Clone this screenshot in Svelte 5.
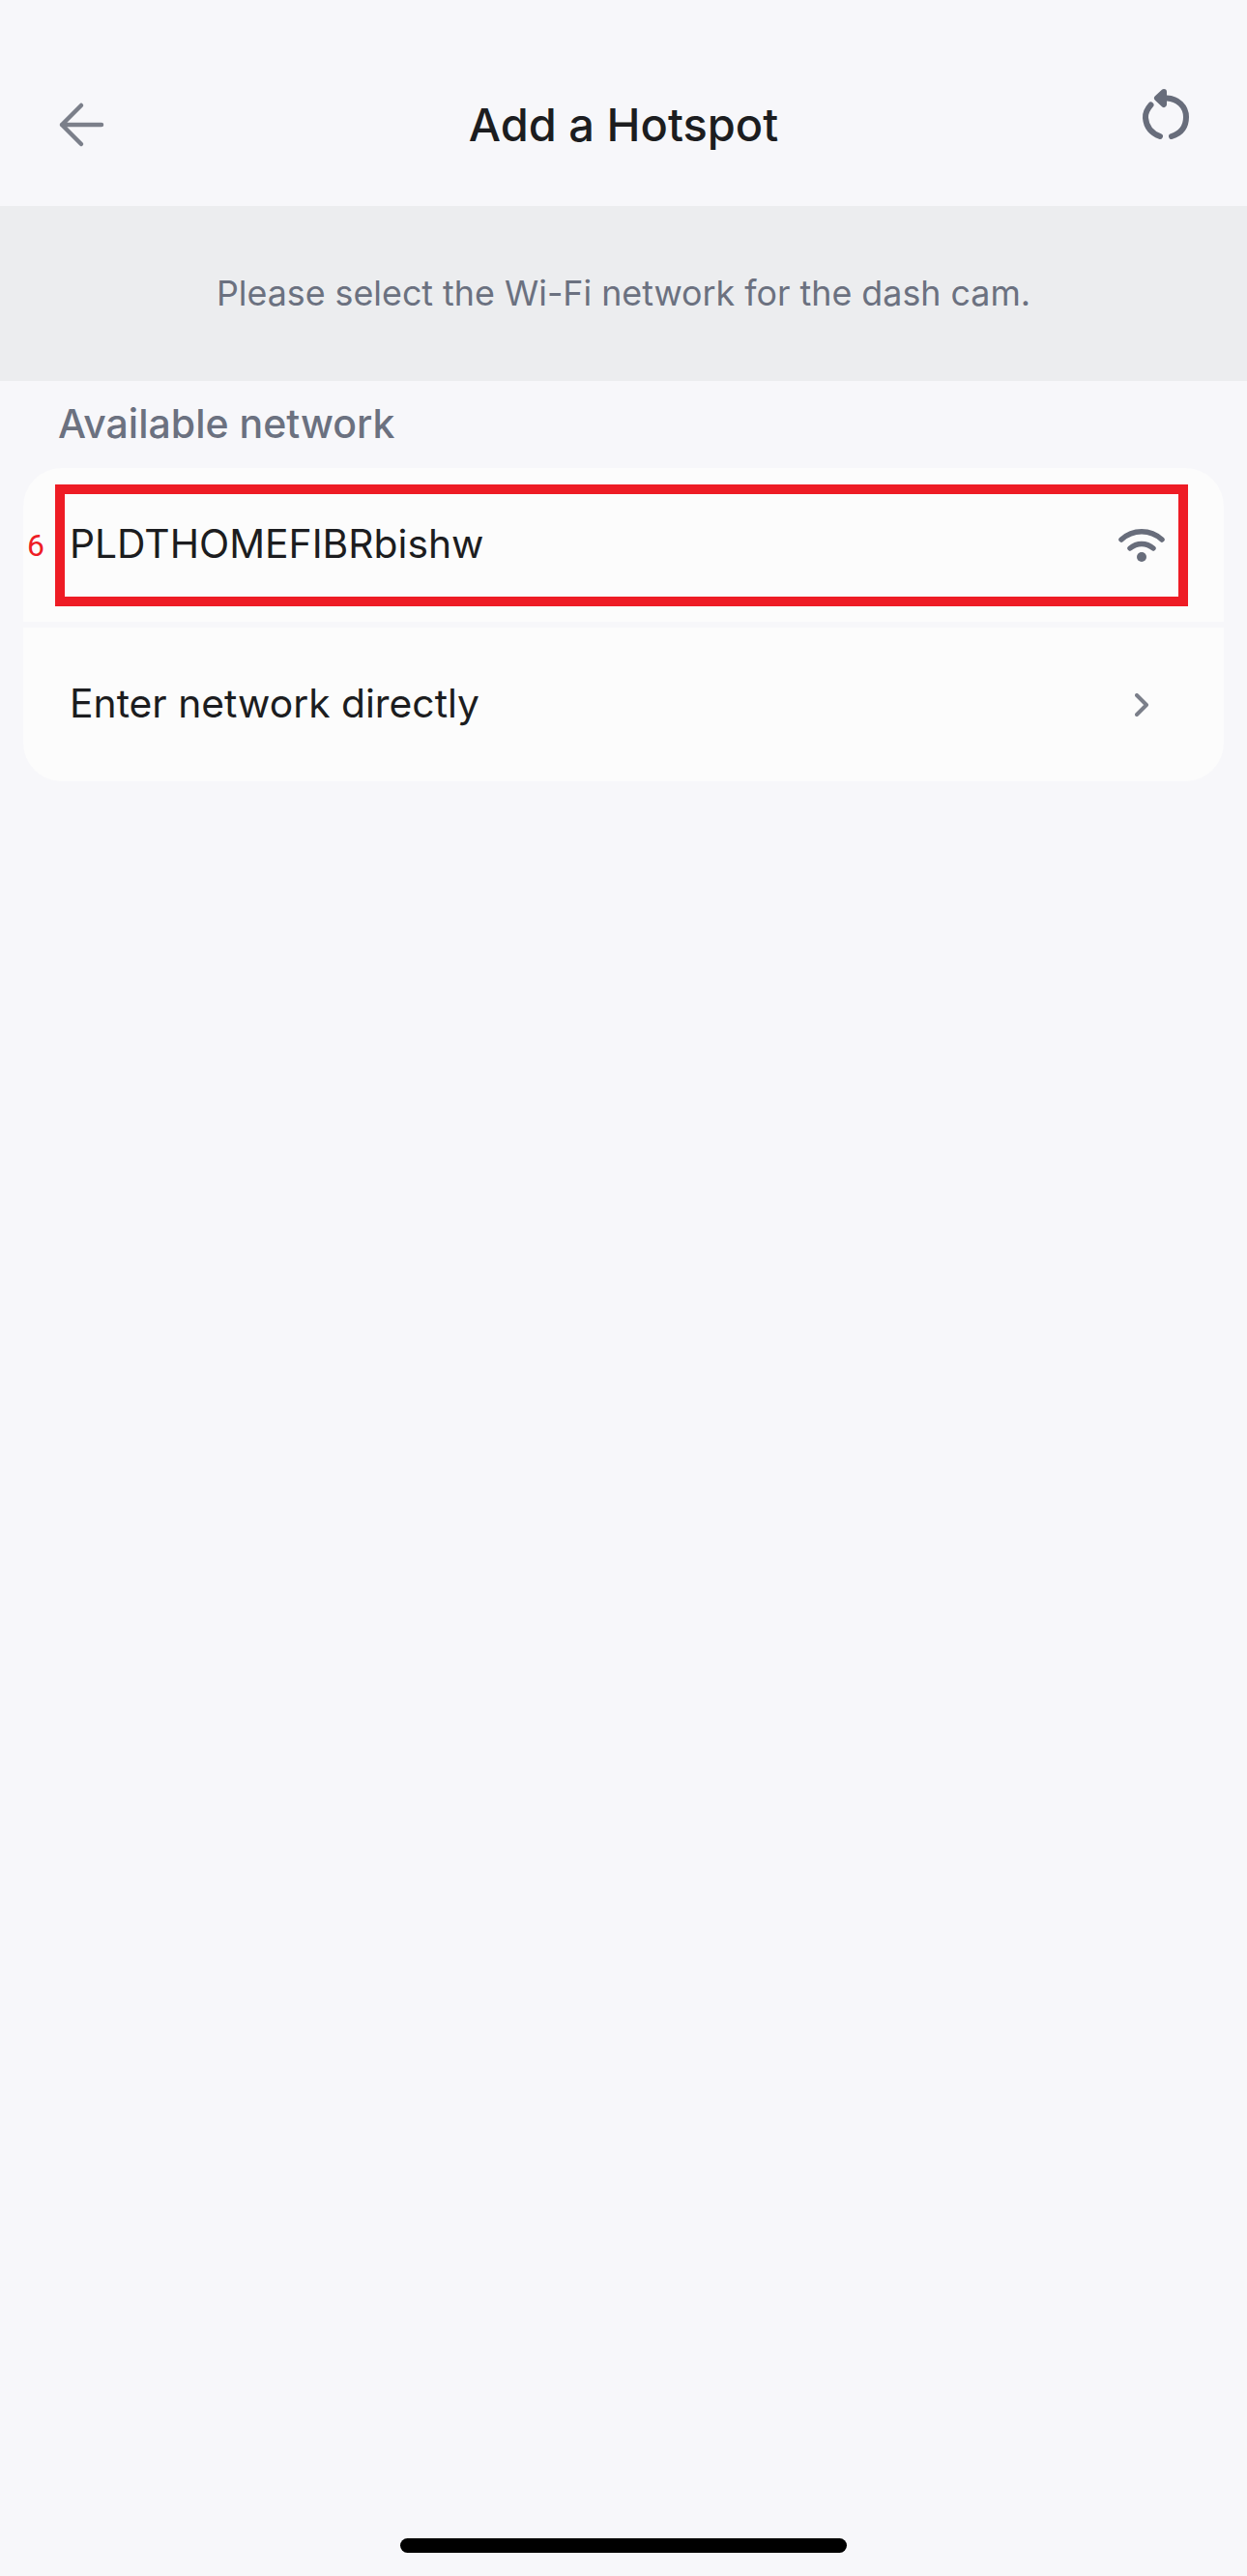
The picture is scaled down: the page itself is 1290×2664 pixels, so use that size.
<script>
    const networks = [{ name: "PLDTHOMEFIBRbishw", icon: "wifi" }, { name: "Enter network directly", icon: "chevron" }];
</script>

<div class="page">
    <header class="topbar">
        <button class="icon-btn back" aria-label="Back">
            <svg width="48" height="48" viewBox="0 0 48 48" fill="none" stroke="#7b7f8a" stroke-width="4.5" stroke-linecap="round" stroke-linejoin="round">
                <path d="M45 24H4M24 4L4 24l20 20" />
            </svg>
        </button>
        <h1>Add a Hotspot</h1>
        <button class="icon-btn refresh" aria-label="Refresh">
            <svg width="50" height="54" viewBox="0 0 50 54" fill="none" stroke="#686d7b" stroke-width="6" stroke-linecap="round" stroke-linejoin="round">
                <path d="M9.500 17.500C5.500 22 3.500 26 4 31c.8 9 5.500 15.500 15 19" />
                <path d="M31 50c9.500-3 15-10 15-20 0-11-8.500-19-20-19.500" />
                <path d="M23 4l-7 6.500 7 6.500z" fill="#686d7b" />
            </svg>
        </button>
    </header>

    <div class="banner">Please select the Wi-Fi network for the dash cam.</div>

    <div class="section-label">Available network</div>

    <div class="card">
        {#each networks as net}
            <div class="row">
                <span class="name">{net.name}</span>
                {#if net.icon === "wifi"}
                    <svg class="wifi" width="48" height="36" viewBox="0 0 48 36" fill="none" stroke="#686d7b" stroke-width="5.500" stroke-linecap="round">
                        <path d="M3 12C15 1 33 1 45 12" />
                        <path d="M12 21c7-6 17-6 24 0" />
                        <circle cx="24" cy="30" r="5" fill="#686d7b" stroke="none" />
                    </svg>
                {:else}
                    <svg class="chevron" width="14" height="24" viewBox="0 0 14 24" fill="none" stroke="#7b7f8a" stroke-width="4" stroke-linecap="round" stroke-linejoin="round">
                        <path d="M2 2l10 10L2 22" />
                    </svg>
                {/if}
            </div>
        {/each}

        <!-- annotation over first row -->
        <div class="marker"></div>
        <span class="marker-num">6</span>
    </div>

    <div class="home-bar"></div>
</div>

<style>
    :global(body) {
        margin: 0;
        background: #f7f7fa;
    }

    .page {
        height: 2664px;
        position: relative;
        background: #f7f7fa;
        font-family: Inter, "Liberation Sans", sans-serif;
        overflow: hidden;
    }

    .topbar {
        height: 213px;
        position: relative;
        display: flex;
        align-items: center;
        justify-content: center;
    }

    h1 {
        margin: 0;
        font-size: 47px;
        font-weight: 500;
        color: #1c1d20;
        position: relative;
        top: 22px;
    }

    .icon-btn {
        position: absolute;
        padding: 0;
        border: 0;
        background: none;
        line-height: 0;
    }

    .back {
        left: 60px;
        top: 105px;
    }

    .refresh {
        left: 1181px;
        top: 91px;
    }

    .banner {
        height: 181px;
        background: #ecedef;
        display: flex;
        align-items: center;
        justify-content: center;
        padding-bottom: 2px;
        box-sizing: border-box;
        font-size: 35.8px;
        color: #6b7180;
    }

    .section-label {
        margin: 20px 0 0 60px;
        height: 70px;
        font-size: 41px;
        line-height: 48px;
        font-weight: 500;
        color: #6b7180;
    }

    .card {
        margin: 0 24px 0 24px;
        position: relative;
        background: #f7f7fa;
        border-radius: 40px;
        overflow: hidden;
        display: flex;
        flex-direction: column;
        gap: 6px;
    }

    .row {
        height: 159px;
        background: #fcfcfc;
        display: flex;
        align-items: center;
        justify-content: space-between;
        padding: 0 60px 0 48px;
        font-size: 40.8px;
        color: #1c1d20;
    }

    .name {
        padding-bottom: 3px;
    }

    .wifi {
        margin-right: 1px;
    }

    .chevron {
        margin-right: 18px;
    }

    .marker {
        position: absolute;
        left: 33px;
        top: 17px;
        width: 1152px;
        height: 106px;
        border: 10px solid #ee1c25;
    }

    .marker-num {
        position: absolute;
        left: 4px;
        top: 61px;
        font-family: Roboto, sans-serif;
        font-size: 32px;
        color: #ee1c25;
    }

    .home-bar {
        position: absolute;
        left: 414px;
        top: 2625px;
        width: 462px;
        height: 15px;
        border-radius: 8px;
        background: #000;
    }
</style>
